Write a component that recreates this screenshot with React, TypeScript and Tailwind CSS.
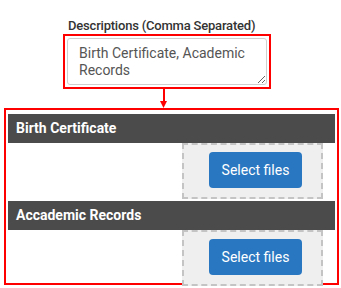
import React from 'react';

const sections = ['Birth Certificate', 'Accademic Records'];

function UploadSection({ title }: { title: string }) {
  return (
    <div className="flex flex-col">
      <div className="h-[29px] bg-[#4b4b4b] text-white font-bold text-[14px] leading-[29px] pl-[8px] mr-[2px]">
        {title}
      </div>
      <div className="ml-[174px] w-[141px] h-[56px] bg-[#efefef] border-2 border-dashed border-[#c4c4c4] pl-[25px] pt-[7px]">
        <button
          type="button"
          className="w-[93px] h-[36px] rounded-[4px] bg-[#2a77c1] text-white text-[14px]"
        >
          Select files
        </button>
      </div>
    </div>
  );
}

export default function App() {
  return (
    <div className="w-[341px] h-[288px] bg-white overflow-hidden font-['Roboto',sans-serif] flex flex-col">
      <div className="pt-[18px] pl-[68px] text-[13px] font-medium tracking-[-0.2px] text-[#333] leading-[16px]">
        Descriptions (Comma Separated)
      </div>
      <div className="ml-[63px] w-[208px] h-[55px] border-2 border-[#ff0000] p-[2px]">
        <textarea
          readOnly
          defaultValue="Birth Certificate, Academic Records"
          className="w-full h-full border border-[#cfcfcf] rounded-[3px] pl-[11px] pt-[6px] text-[14px] leading-[17px] text-[#555] resize-y outline-none font-['Roboto',sans-serif] overflow-hidden"
        />
      </div>
      <div className="ml-[160px] flex flex-col items-center w-[7px]">
        <div className="w-[2px] h-[12px] bg-[#ff0000]" />
        <svg width="7" height="7" viewBox="0 0 7 7" className="block">
          <polygon points="0,0 7,0 3.5,7" fill="#ff0000" />
        </svg>
      </div>
      <div className="ml-[4px] w-[335px] h-[177px] border-2 border-[#ff0000] pt-[4px] pl-[2px] flex flex-col gap-[2px]">
        {sections.map((s) => (
          <UploadSection key={s} title={s} />
        ))}
      </div>
    </div>
  );
}
